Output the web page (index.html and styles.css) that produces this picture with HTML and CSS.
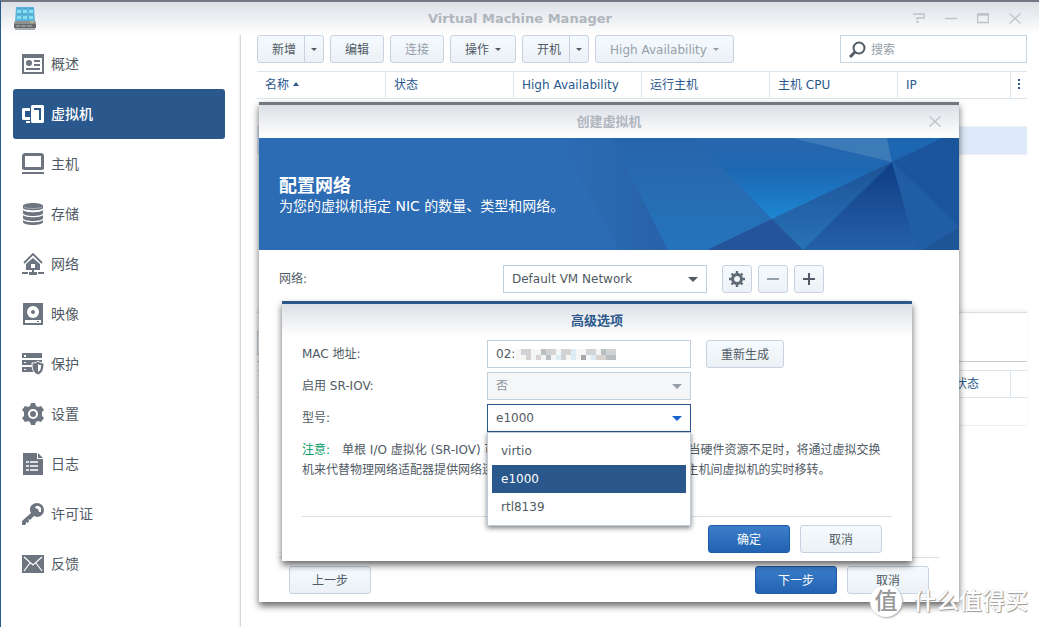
FILE: index.html
```html
<!DOCTYPE html>
<html lang="zh-CN">
<head>
<meta charset="utf-8">
<title>Virtual Machine Manager</title>
<link rel="stylesheet" href="styles.css">
</head>
<body>
<svg class="defs" aria-hidden="true">
  <defs>
    <symbol id="caret" viewBox="0 0 10 6"><path d="M0 0h10L5 5z" fill="currentColor"/></symbol>
    <symbol id="small-caret" viewBox="0 0 6 4"><path d="M0 0h6L3 3z" fill="currentColor"/></symbol>
    <symbol id="close" viewBox="0 0 12 11"><path d="M.5.5l11 10M11.500.500l-11 10" fill="none" stroke="currentColor" stroke-width="1.3"/></symbol>
  </defs>
</svg>
<div class="app">
  <header class="titlebar">
    <svg class="app-logo" viewBox="0 0 24 24" aria-hidden="true">
      <path d="M3 0h18l1 15H2z" fill="#5cb4dc"/>
      <g fill="#86def2"><path d="M4 2h4v4H4zM10 2h4v4h-4zM16 2h4v4h-4zM4 8h4v4H4zM10 8h4v4h-4zM16 8h4v4h-4z"/></g>
      <path d="M4 2h4M10 2h4M16 2h4M4 8h4M10 8h4M16 8h4" stroke="#3c97bd"/>
      <path d="M2 14h20l1 2v5H1v-5z" fill="#8d8f91"/><path d="M1 17h22v4H1z" fill="#67696c"/><path d="M2 22h20" stroke="#a9abad" stroke-width="2"/><path d="M3 19h4M8 19h5M14 19h5" stroke="#b8babc"/><path d="M17 15h4" stroke="#d5dc90"/>
    </svg>
    <h1 class="window-title">Virtual Machine Manager</h1>
    <div class="window-controls">
      <button class="win-btn" aria-label="帮助"><svg width="12" height="11" viewBox="0 0 12 11"><path d="M0 1h11v4H4v2" fill="none" stroke="currentColor" stroke-width="1.4"/><path d="M3 9h3" stroke="currentColor" stroke-width="1.4"/></svg></button>
      <button class="win-btn" aria-label="最小化"><svg width="12" height="11" viewBox="0 0 12 11"><path d="M0 5.500h12" stroke="currentColor" stroke-width="1.400"/></svg></button>
      <button class="win-btn" aria-label="最大化"><svg width="12" height="11" viewBox="0 0 12 11"><path d="M.5.5h11v9H.5zM0 2h12" fill="none" stroke="currentColor" stroke-width="1.5"/></svg></button>
      <button class="win-btn" aria-label="关闭"><svg width="12" height="11"><use href="#close"/></svg></button>
    </div>
  </header>
  <div class="body">
    <nav class="sidebar">
      <a class="nav-item" href="#overview"><svg class="nav-icon" viewBox="0 0 22 22"><path fill-rule="evenodd" d="M0 1h22v20H0zM2 5v14h18V5z"/><circle cx="7" cy="10" r="3"/><path d="M12 8h6M12 12h6M4 16h14" class="line"/></svg>概述</a>
      <a class="nav-item active" href="#vm" aria-current="page"><svg class="nav-icon" viewBox="0 0 22 22"><path fill-rule="evenodd" d="M10 2h11l1 1v16l-1 1H10l-1-1V3zM12 5v2h5v10h2V5z"/><path d="M8 5H1L0 6v10l1 1h7v-3H3V8h5zM4 18h4v2H4z"/></svg>虚拟机</a>
      <a class="nav-item" href="#host"><svg class="nav-icon" viewBox="0 0 22 22"><path fill-rule="evenodd" d="M2 0h18l2 2v14l-2 1H2l-2-1V2zM3 3v11h16V3z"/><path d="M0 19h22v2H0z"/></svg>主机</a>
      <a class="nav-item" href="#storage"><svg class="nav-icon" viewBox="0 0 22 22"><path d="M1 3c0-4 20-4 20 0v2c0 3-20 3-20 0zM1 7c2 3 18 3 20 0v3c0 4-20 4-20 0zM1 12c2 3 18 3 20 0v3c0 4-20 4-20 0zM1 17c2 3 18 3 20 0v2c0 4-20 4-20 0z"/><path d="M2 4c3 2 15 2 18 0" fill="none" stroke="#a7acb3"/></svg>存储</a>
      <a class="nav-item" href="#network"><svg class="nav-icon" viewBox="0 0 22 22"><path d="M2 10l9-9 9 9" fill="none" stroke="currentColor" stroke-width="1.800"/><path fill-rule="evenodd" d="M4 11l7-6 7 6v6H4zM9 11v4h4v-4z"/><path d="M10 17h2v2h3v3H7v-3h3zM0 19h6v2H0zM16 19h6v2h-6z"/></svg>网络</a>
      <a class="nav-item" href="#image"><svg class="nav-icon" viewBox="0 0 22 22"><path fill-rule="evenodd" d="M1 0h20v22H1zM3 17v3h16v-3z"/><circle cx="11" cy="9" r="6" fill="#fff"/><circle cx="11" cy="9" r="2"/><path d="M15 18h2v1h-2z"/></svg>映像</a>
      <a class="nav-item" href="#protection"><svg class="nav-icon" viewBox="0 0 22 22"><path d="M0 0h20v5H0zM0 7h20v5H0zM0 14h12v5H0z"/><path d="M2 2h2v2H2zM2 9h2v1H2zM2 16h2v1H2z" fill="#fff"/><path d="M16 8c2 2 4 2 6 2 0 6-1 10-6 12-5-2-6-6-6-12 2 0 4 0 6-2z" stroke="#fff"/><path d="M16 11v8c3-2 3-4 3-7-1 0-2 0-3-1z" fill="#fff"/></svg>保护</a>
      <a class="nav-item" href="#settings"><svg class="nav-icon" viewBox="0 0 22 22"><path fill-rule="evenodd" d="M9 0h4l1 3 2 1 3-1 3 4-2 2v4l2 2-3 4-3-1-2 1-1 3H9l-1-3-2-1-3 1-3-4 2-2V9L0 7l3-4 3 1 2-1zM11 6a5 5 0 1 0 0 10 5 5 0 0 0 0-10z"/><circle cx="11" cy="11" r="3"/></svg>设置</a>
      <a class="nav-item" href="#log"><svg class="nav-icon" viewBox="0 0 22 22"><path d="M1 0h14v6h6v16H1zM16 0l5 5h-5z"/><path d="M4 9h3M8 9h8M4 13h3M8 13h8M4 17h3M8 17h8" fill="none" stroke="#fff" stroke-width="1.600"/></svg>日志</a>
      <a class="nav-item" href="#license"><svg class="nav-icon" viewBox="0 0 22 22"><path fill-rule="evenodd" d="M15 0a7 7 0 0 1 0 14l-3-1-4 4-2-1 1 2-1 2-2-1v2l-1 1H0v-4L9 10C6 5 10 0 15 0zM14 3l-1 2 3 1 1 3 2 0 0-4-2-2z"/></svg>许可证</a>
      <a class="nav-item" href="#feedback"><svg class="nav-icon" viewBox="0 0 22 22"><path d="M0 2h22v18H0z"/><path d="M2 4l9 8 9-8M2 18l6-8M20 18l-6-8" fill="none" stroke="#fff" stroke-width="1.200"/></svg>反馈</a>
    </nav>
    <main class="content">
      <div class="toolbar">
        <div class="split"><button class="btn">新增</button><button class="btn arrow" aria-label="新增菜单"><svg class="mini"><use href="#small-caret"/></svg></button></div>
        <button class="btn">编辑</button>
        <button class="btn" disabled>连接</button>
        <button class="btn">操作<svg class="mini"><use href="#small-caret"/></svg></button>
        <div class="split"><button class="btn">开机</button><button class="btn arrow" aria-label="开机菜单"><svg class="mini"><use href="#small-caret"/></svg></button></div>
        <button class="btn" disabled>High Availability<svg class="mini"><use href="#small-caret"/></svg></button>
        <label class="search">
          <svg width="17" height="17" viewBox="0 0 17 17" aria-hidden="true"><circle cx="10" cy="7" r="5.500" fill="none" stroke="#505a64" stroke-width="2"/><path d="M6 11l-5 5" stroke="#505a64" stroke-width="3"/></svg>
          <input type="search" placeholder="搜索" aria-label="搜索">
        </label>
      </div>
      <table class="grid">
        <colgroup><col class="c-name"><col class="c"><col class="c"><col class="c"><col class="c"><col><col class="c-more"></colgroup>
        <thead><tr><th>名称<svg class="sort" viewBox="0 0 6 4"><path d="M0 4h6L3 0z" fill="currentColor"/></svg></th><th>状态</th><th>High Availability</th><th>运行主机</th><th>主机 CPU</th><th>IP</th><th class="more"><svg width="3" height="10" viewBox="0 0 3 10"><path d="M0 0h2v2H0zM0 4h2v2H0zM0 8h2v2H0z" fill="currentColor"/></svg></th></tr></thead>
        <tbody><tr><td colspan="7"></td></tr><tr class="selected"><td colspan="7"></td></tr></tbody>
      </table>
      <section class="details">
        <div class="detail-bar"><div class="detail-tab"></div></div>
        <table class="grid">
          <colgroup><col><col class="c-state"><col class="c-more"></colgroup>
          <thead><tr><th></th><th>状态</th><th></th></tr></thead>
          <tbody><tr><td colspan="3"></td></tr></tbody>
        </table>
      </section>
    </main>
  </div>

  <section class="dialog wizard" role="dialog" aria-labelledby="wizard-title">
    <header class="dialog-head"><h2 id="wizard-title">创建虚拟机</h2><button class="win-btn dialog-close" aria-label="关闭"><svg width="12" height="11"><use href="#close"/></svg></button></header>
    <div class="banner">
      <svg class="banner-art" viewBox="0 0 700 112" preserveAspectRatio="xMaxYMid slice" aria-hidden="true">
        <defs>
          <linearGradient id="g1" x1="0" y1="0" x2="0" y2="1"><stop offset="0" stop-color="#2765ab"/><stop offset="1" stop-color="#2574bd"/></linearGradient>
          <linearGradient id="g2" x1="0" y1="0" x2="0" y2="1"><stop offset="0" stop-color="#2966ad"/><stop offset=".4" stop-color="#1d67b2"/><stop offset="1" stop-color="#1c87d2"/></linearGradient>
          <linearGradient id="g3" x1="0" y1="0" x2="0" y2="1"><stop offset="0" stop-color="#1d5296"/><stop offset="1" stop-color="#2872b6"/></linearGradient>
          <linearGradient id="g4" x1="0" y1="0" x2="0" y2="1"><stop offset="0" stop-color="#0f3d84"/><stop offset="1" stop-color="#2561a8"/></linearGradient>
          <linearGradient id="g5" x1="0" y1="0" x2="1" y2="0"><stop offset="0" stop-color="#2c6cb4"/><stop offset="1" stop-color="#2862a8"/></linearGradient>
        </defs>
        <path d="M300 0h53l56 112h-49z" fill="url(#g5)"/>
        <path d="M353 0h91l69 81-65 31h-39z" fill="url(#g1)"/>
        <path d="M435 0h98l100 24-120 57z" fill="url(#g2)"/>
        <path d="M533 0h95l5 24z" fill="#3c7ab8"/>
        <path d="M628 0h55l-50 24z" fill="#1d66b1"/>
        <path d="M683 0h17v89l-67-65z" fill="#1b569d"/>
        <path d="M633 24L513 81l31 31z" fill="url(#g3)"/>
        <path d="M448 112l65-31 31 31z" fill="#24559b"/>
        <path d="M633 24l-89 88h114z" fill="url(#g4)"/>
        <path d="M633 24l67 65-37 23h-5z" fill="#215da3"/>
        <path d="M700 89v23h-37z" fill="#1d5597"/>
      </svg>
      <h3>配置网络</h3>
      <p>为您的虚拟机指定 NIC 的数量、类型和网络。</p>
    </div>
    <div class="wizard-body">
      <div class="field-row">
        <label class="wizard-label" for="net">网络:</label>
        <div class="combo"><select id="net"><option>Default VM Network</option></select><svg class="combo-arrow"><use href="#caret"/></svg></div>
        <div class="icon-buttons">
          <button class="btn icon" aria-label="高级选项"><svg width="16" height="16" viewBox="0 0 16 16"><circle cx="8" cy="8" r="4.500" fill="none" stroke="#5f6b77" stroke-width="3"/><path d="M8 0v3M8 13v3M0 8h3M13 8h3M2.500 2.500l2 2M11.500 11.500l2 2M13.500 2.500l-2 2M4.500 11.500l-2 2" stroke="#5f6b77" stroke-width="2.400"/></svg></button>
          <button class="btn icon" aria-label="删除" disabled><svg width="12" height="12" viewBox="0 0 12 12"><path d="M0 6h12" stroke="#96a1ac" stroke-width="2"/></svg></button>
          <button class="btn icon" aria-label="添加"><svg width="12" height="12" viewBox="0 0 12 12"><path d="M0 6h12M6 0v12" stroke="#505a64" stroke-width="2"/></svg></button>
        </div>
      </div>
    </div>
    <footer class="wizard-foot">
      <button class="btn wide">上一步</button>
      <button class="btn wide primary push">下一步</button>
      <button class="btn wide">取消</button>
    </footer>

    <section class="dialog advanced" role="dialog" aria-labelledby="adv-title">
      <header class="dialog-head"><h2 id="adv-title">高级选项</h2></header>
      <div class="adv-form">
        <div class="field-row">
          <label class="adv-label" for="mac">MAC 地址:</label>
          <div class="combo"><input id="mac" type="text" value="02:"><svg class="mosaic" viewBox="0 0 20 2" preserveAspectRatio="none" shape-rendering="crispEdges" aria-hidden="true"><path fill="#f4f5f5" d="M0 0h20v2H0z"/><path fill="#cfd3d6" d="M1 0h2v1H1zM5 0h2v1H5zM9 0h1v2H9zM14 0h2v1h-2zM18 0h2v1h-2z"/><path fill="#d8d3d0" d="M2 1h1v1H2zM4 1h1v1H4zM7 0h1v1H7zM10 0h1v1h-1zM16 1h2v1h-2z"/><path fill="#b9bec1" d="M5 0h1v1H5zM6 1h1v1H6zM17 0h1v1h-1zM18 1h2v1h-2z"/><path fill="#a6a5ab" d="M13 1h1v1h-1z"/><path fill="#dcecf5" d="M11 0h1v2h-1zM8 1h1v1H8zM15 1h1v1h-1z"/></svg></div>
          <button class="btn regen">重新生成</button>
        </div>
        <div class="field-row">
          <label class="adv-label" for="sriov">启用 SR-IOV:</label>
          <div class="combo"><select id="sriov" disabled><option>否</option></select><svg class="combo-arrow muted"><use href="#caret"/></svg></div>
        </div>
        <div class="field-row">
          <label class="adv-label" for="model">型号:</label>
          <div class="combo">
            <select id="model" class="focused"><option>virtio</option><option selected>e1000</option><option>rtl8139</option></select><svg class="combo-arrow blue"><use href="#caret"/></svg>
            <ul class="menu" role="listbox" aria-label="型号"><li role="option">virtio</li><li role="option" class="picked" aria-selected="true">e1000</li><li role="option">rtl8139</li></ul>
          </div>
        </div>
        <p class="note"><span class="note-tag">注意:</span>单根 I/O 虚拟化 (SR-IOV) 可提高网络性能并降低了主机的负载。当硬件资源不足时，将通过虚拟交换机来代替物理网络适配器提供网络连接。启用 SR-IOV 后将无法执行不同主机间虚拟机的实时移转。</p>
      </div>
      <footer class="adv-foot"><button class="btn wide primary">确定</button><button class="btn wide">取消</button></footer>
    </section>
  </section>
  <div class="watermark"><span class="watermark-badge">值</span>什么值得买</div>
</div>
</body>
</html>
```
FILE: styles.css
```css
* { box-sizing: border-box; }
body {
  margin: 0;
  font: 12px/20px "DejaVu Sans", "Noto Sans CJK SC", sans-serif;
  color: #505a64;
  background: #fff;
}
h1, h2, h3, p, ul { margin: 0; padding: 0; }
button, input, select { font: inherit; color: inherit; margin: 0; }
.defs { position: absolute; width: 0; height: 0; }

.app {
  position: relative;
  display: flex;
  flex-direction: column;
  min-height: 100vh;
  overflow: hidden;
  border-top: 2px solid #727882;
  border-left: 1px solid #2a598f;
}
.titlebar {
  display: flex;
  align-items: center;
  justify-content: space-between;
  height: 33px;
  padding: 0 18px 0 12px;
  background: linear-gradient(#dce0e6, #fff);
}
.app-logo { width: 24px; height: 24px; }
.window-title {
  flex: 1;
  padding-left: 90px;
  text-align: center;
  font-size: 13px;
  line-height: 20px;
  color: #b0b6be;
}
.window-controls { display: flex; gap: 20px; }
.win-btn {
  display: flex;
  padding: 0;
  border: 0;
  background: none;
  color: #bfc3c8;
}

.body { display: flex; flex: 1; }
.sidebar {
  display: flex;
  flex-direction: column;
  width: 240px;
  padding: 4px 15px 0 12px;
  border-right: 1px solid #d8d8d8;
  box-shadow: inset -2px 0 2px -1px #eee;
}
.nav-item {
  display: flex;
  align-items: center;
  gap: 7px;
  height: 50px;
  padding-left: 9px;
  border-radius: 3px;
  font-size: 14px;
  color: #505a64;
  text-decoration: none;
}
.nav-item.active { background: #2a588c; color: #fff; font-weight: 500; }
.nav-icon { width: 22px; height: 22px; fill: #6d7580; color: #6d7580; }
.nav-icon .line { stroke: #6d7580; stroke-width: 2; }
.active .nav-icon { fill: #fff; }

.content { flex: 1; min-width: 0; padding: 0 12px 0 16px; }
.toolbar { display: flex; gap: 6px; margin-bottom: 8px; }
.btn {
  display: flex;
  align-items: center;
  justify-content: center;
  height: 28px;
  padding: 2px 14px 0;
  border: 1px solid #c6d2e0;
  border-radius: 3px;
  background: linear-gradient(#f5fafe, #ebf1f6);
  white-space: nowrap;
}
.btn:disabled { color: #969fa9; }
.split { display: flex; }
.split .btn:first-child { border-radius: 3px 0 0 3px; padding: 2px 8px 0 14px; }
.split .arrow { width: 20px; margin-left: -1px; padding: 2px 0 0; border-radius: 0 3px 3px 0; }
.mini { width: 6px; height: 4px; }
.btn:not(.arrow) .mini { margin-left: 6px; }
.search {
  display: flex;
  align-items: center;
  gap: 5px;
  width: 187px;
  height: 28px;
  margin-left: auto;
  padding: 0 8px;
  border: 1px solid #c6d4e0;
}
.search input { flex: 1; min-width: 0; padding: 2px 0 0; border: 0; outline: 0; background: none; }
.search input::placeholder { color: #969fa9; }

.grid { width: 100%; border-collapse: separate; border-spacing: 0; table-layout: fixed; }
.c-name { width: 129px; }
.c { width: 128px; }
.c-more { width: 16px; }
.c-state { width: 64px; }
.grid th {
  height: 28px;
  padding: 0 8px;
  border: solid #dbe5ee;
  border-width: 1px 1px 1px 0;
  text-align: left;
  font-weight: 400;
  color: #2a588c;
}
.grid th:last-child { border-right: 0; }
.grid th.more { padding: 0 0 0 7px; }
.grid td { height: 28px; padding: 0; border-bottom: 1px solid #eef0f2; }
.grid .selected td { background: #deeafa; }
.sort { width: 6px; height: 4px; margin: 0 0 3px 4px; }

.details { margin-top: 157px; border-top: 1px solid #ddd; box-shadow: 0 -2px 3px #f0f0f0; }
.detail-bar { height: 49px; margin-bottom: 8px; padding-top: 18px; border-bottom: 1px solid #ccc; }
.detail-tab { width: 80px; height: 24px; border: 1px solid #c6d4e0; }

.dialog { position: absolute; background: #fff; box-shadow: 0 4px 7px rgba(0, 0, 0, .6); }
.dialog-head {
  display: flex;
  align-items: center;
  justify-content: center;
  height: 33px;
  background: linear-gradient(#dce0e6, #fff);
}
.dialog-head h2 { font-size: 13px; line-height: 20px; }
.wizard { top: 100px; left: 258px; right: 80px; border-top: 3px solid #727882; }
.wizard h2 { color: #b0b6be; }
.dialog-close { position: absolute; right: 18px; }
.banner {
  position: relative;
  height: 112px;
  padding: 38px 20px 0;
  background: #2c6cb4;
  color: #fff;
}
.banner-art { position: absolute; top: 0; left: 0; width: 100%; height: 100%; }
.banner h3, .banner p { position: relative; font-size: 14px; line-height: 20px; }
.banner h3 { font-size: 18px; }
.wizard-body { min-height: 307px; padding: 15px 20px 0; }
.field-row { display: flex; align-items: center; }
.wizard-label { width: 224px; }
.combo { position: relative; width: 204px; }
.combo select, .combo input {
  display: block;
  width: 100%;
  height: 28px;
  padding: 0 8px;
  border: 1px solid #c0cfdd;
  border-radius: 0;
  outline: 0;
  background: #fff;
  appearance: none;
}
.combo select:disabled { background: #f5f6f8; color: #8b949e; opacity: 1; }
.combo .focused { border-color: #2a588c; }
.combo-arrow { position: absolute; right: 9px; top: 12px; width: 10px; height: 6px; pointer-events: none; }
.combo .muted { color: #969fa9; }
.combo .blue { color: #1764ce; }
.icon-buttons { display: flex; gap: 6px; margin-left: 15px; }
.icon { width: 30px; padding: 0; }
.wizard-foot {
  display: flex;
  gap: 10px;
  margin: 0 20px;
  padding: 8px 10px;
  border-top: 1px solid #ddd;
}
.wide { width: 82px; }
.primary { border-color: #1f5ca8; background: linear-gradient(#3c7eca, #2163b2); color: #fff; }
.push { margin-left: auto; }

.advanced { top: 196px; left: 23px; right: 47px; border-top: 3px solid #2a588c; }
.advanced h2 { color: #2a588c; }
.adv-form { display: flex; flex-direction: column; gap: 4px; padding: 3px 20px 0; }
.adv-label { width: 185px; }
.regen { margin-left: 15px; }
.mosaic { position: absolute; left: 29px; top: 9px; width: 100px; height: 11px; }
.menu {
  position: absolute;
  z-index: 1;
  top: 28px;
  left: 0;
  width: 100%;
  padding: 4px;
  border: 1px solid #c0cbd8;
  background: #fff;
  box-shadow: 0 2px 5px rgba(0, 0, 0, .5);
  list-style: none;
}
.menu li { height: 28px; padding: 0 9px; line-height: 28px; }
.menu .picked { background: #2a588c; color: #fff; }
.note { min-height: 80px; padding-top: 4px; }
.note-tag { margin-right: 12px; color: #009a66; }
.adv-foot {
  display: flex;
  justify-content: flex-end;
  gap: 10px;
  margin: 0 20px;
  padding: 8px 10px;
  border-top: 1px solid #ddd;
}

.watermark {
  position: absolute;
  right: 11px;
  bottom: 10px;
  display: flex;
  align-items: center;
  gap: 11px;
  font-size: 23px;
  font-weight: 500;
  line-height: 32px;
  color: #fff;
  text-shadow: 1px 1px 1px #999, 0 0 1px #bbb;
}
.watermark-badge {
  width: 32px;
  border-radius: 50%;
  background: #fff;
  box-shadow: 1px 1px 2px #aaa;
  text-align: center;
  color: #999;
  text-shadow: none;
}
```
